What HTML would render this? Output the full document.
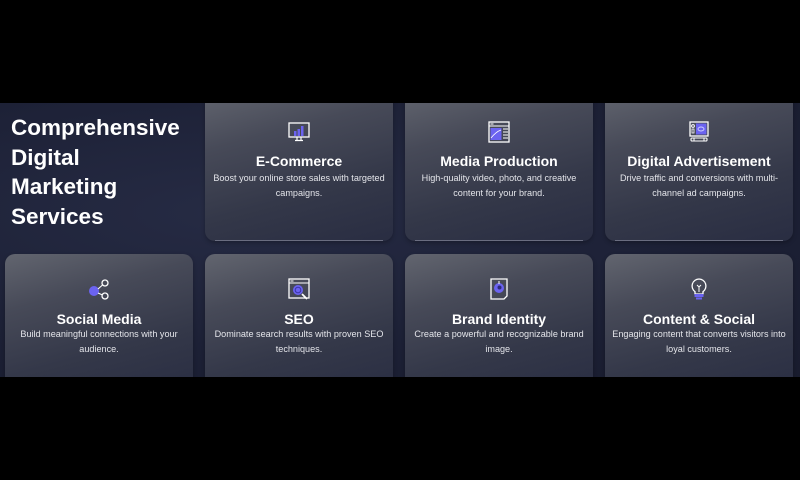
<!DOCTYPE html>
<html><head><meta charset="utf-8"><style>
*{margin:0;padding:0;box-sizing:border-box}
body{width:800px;height:480px;background:#000;position:relative;overflow:hidden;font-family:"Liberation Sans",Arial,sans-serif;color:#fff}
.mid{position:absolute;left:0;top:103px;width:800px;height:274px;background:radial-gradient(ellipse at 30% 40%,#262b44 0%,#1c2035 60%,#191c2e 100%);overflow:hidden}
h1{position:absolute;left:11px;top:10px;font-size:22.5px;line-height:29.5px;font-weight:bold;color:#fff}
.card{position:absolute;width:188px;border-radius:10px;background:linear-gradient(165deg,#62656f 0%,#474a58 30%,#343849 65%,#292d42 100%);text-align:center;box-shadow:0 2px 4px rgba(0,0,0,.25)}
.card:after{content:"";position:absolute;left:10px;right:10px;bottom:0;height:1px;background:#6a6d80}
.r1{top:-12px;height:150px}
.r2{top:151px;height:140px}
.card svg{position:absolute;left:82px;width:24px;height:24px}
.r1 svg{top:29px}.r2 svg{top:23px}
.t{position:absolute;left:0;right:0;font-size:14px;font-weight:bold}
.r1 .t{top:62px}.r2 .t{top:57px}
.d{position:absolute;left:4px;right:4px;font-size:9.1px;line-height:15px;color:#e4e5ea}
.r1 .d{top:80px}.r2 .d{top:73px}
</style></head><body>
<div class="mid">
<h1>Comprehensive<br>Digital<br>Marketing<br>Services</h1>

<div class="card r1" style="left:205px">
<svg viewBox="0 0 24 24"><rect x="2" y="3" width="20" height="14" fill="none" stroke="#fff" stroke-width="1.3"/><rect x="7" y="11" width="2.5" height="5" fill="#6b63f0"/><rect x="10.5" y="9" width="2.5" height="7" fill="#6b63f0"/><rect x="14" y="6" width="2.5" height="10" fill="#6b63f0"/><path d="M10 17v3M14 17v3M8 20.5h8" stroke="#fff" stroke-width="1.2"/></svg>
<div class="t">E-Commerce</div><div class="d">Boost your online store sales with targeted campaigns.</div></div>

<div class="card r1" style="left:405px">
<svg viewBox="0 0 24 24"><rect x="2" y="2" width="20" height="20" fill="none" stroke="#fff" stroke-width="1.3"/><path d="M2 6h20" stroke="#fff" stroke-width="1"/><path d="M3.5 4h3" stroke="#fff"/><rect x="3.5" y="8" width="11" height="12" fill="#6b63f0"/><path d="M4 18c4-5 7-7 10-8" stroke="#fff" fill="none" stroke-width=".8"/><path d="M16 9h5M16 12h5M16 15h5M16 18h5" stroke="#fff"/></svg>
<div class="t">Media Production</div><div class="d">High-quality video, photo, and creative content for your brand.</div></div>

<div class="card r1" style="left:605px">
<svg viewBox="0 0 24 24"><rect x="3" y="2" width="18" height="14" fill="none" stroke="#fff" stroke-width="1.3"/><rect x="9" y="3.5" width="10.5" height="11" fill="#6b63f0"/><ellipse cx="14" cy="9" rx="3" ry="2" fill="none" stroke="#cfcfff" stroke-width=".9"/><circle cx="6" cy="6" r="1.4" fill="none" stroke="#fff"/><path d="M5 9h2v4H5z" fill="none" stroke="#fff" stroke-width=".8"/><rect x="4" y="18" width="16" height="3" rx="1" fill="none" stroke="#fff" stroke-width="1.1"/><path d="M7 18v3M17 18v3" stroke="#fff"/></svg>
<div class="t">Digital Advertisement</div><div class="d">Drive traffic and conversions with multi-channel ad campaigns.</div></div>

<div class="card r2" style="left:5px">
<svg viewBox="0 0 24 24"><circle cx="7" cy="14" r="5" fill="#6b63f0"/><circle cx="18" cy="6" r="3" fill="none" stroke="#fff" stroke-width="1.3"/><circle cx="18" cy="19" r="3" fill="none" stroke="#fff" stroke-width="1.3"/><path d="M11 12l4.5-4M11 16l4.5 2" stroke="#fff" stroke-width="1.1"/></svg>
<div class="t">Social Media</div><div class="d">Build meaningful connections with your audience.</div></div>

<div class="card r2" style="left:205px">
<svg viewBox="0 0 24 24"><rect x="2" y="2" width="20" height="19" fill="none" stroke="#fff" stroke-width="1.3"/><path d="M2 6h20M3.5 4h3" stroke="#fff" stroke-width="1"/><circle cx="11" cy="13" r="5" fill="#6b63f0"/><circle cx="11" cy="13" r="2.8" fill="none" stroke="#3b34a8" stroke-width="1"/><path d="M15 17l5 5" stroke="#fff" stroke-width="1.8"/></svg>
<div class="t">SEO</div><div class="d">Dominate search results with proven SEO techniques.</div></div>

<div class="card r2" style="left:405px">
<svg viewBox="0 0 24 24"><path d="M4 2h16v17l-3 3H4z" fill="none" stroke="#fff" stroke-width="1.3"/><circle cx="12" cy="11" r="5" fill="#6b63f0"/><circle cx="12.5" cy="10.5" r="2" fill="#2d2a7a"/><path d="M12 4v3" stroke="#fff"/></svg>
<div class="t">Brand Identity</div><div class="d">Create a powerful and recognizable brand image.</div></div>

<div class="card r2" style="left:605px">
<svg viewBox="0 0 24 24"><path d="M12 2a7 7 0 0 0-4 12.7V17h8v-2.3A7 7 0 0 0 12 2z" fill="none" stroke="#fff" stroke-width="1.3"/><path d="M10 8l2 2 2-2M12 10v5" stroke="#fff" stroke-width="1" fill="none"/><rect x="7.5" y="17" width="9" height="3" fill="#6b63f0"/><rect x="9" y="20.5" width="6" height="2" fill="#6b63f0"/></svg>
<div class="t">Content &amp; Social</div><div class="d">Engaging content that converts visitors into loyal customers.</div></div>
</div>
</body></html>
